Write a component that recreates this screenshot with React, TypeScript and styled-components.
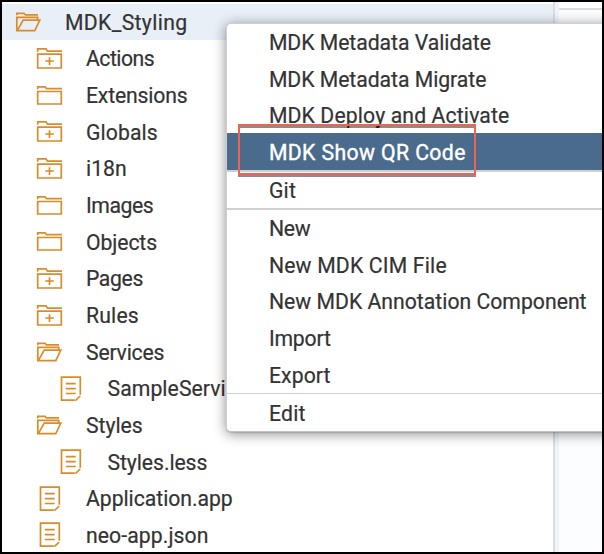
import React from 'react';
import styled, { createGlobalStyle } from 'styled-components';

type IconKind = 'open' | 'closed' | 'plus' | 'file';

const GlobalStyle = createGlobalStyle`
  * { box-sizing: border-box; }
  body { margin: 0; background: #fff; font-family: Roboto, "Liberation Sans", sans-serif; }
`;

const Frame = styled.div`
  position: relative;
  display: flex;
  width: 604px;
  height: 554px;
  overflow: hidden;
  border: 2px solid #000;
  background: #fff;
`;

const Tree = styled.nav`
  width: 551px;
  padding-top: 1.67px;
`;

const TreeRow = styled.div<{ $level: number; $selected?: boolean }>`
  display: flex;
  align-items: center;
  height: 36.67px;
  padding-left: ${p => [13.5, 35, 56][p.$level]}px;
  background: ${p => (p.$selected ? '#e8eff7' : 'transparent')};
`;

const IconSlot = styled.span<{ $level: number }>`
  display: flex;
  flex: none;
  width: ${p => [49.5, 49, 49.5][p.$level]}px;
`;

const Label = styled.span<{ $spacing: number }>`
  display: block;
  font-size: 21.2px;
  line-height: 36.67px;
  padding-top: 1.4px;
  letter-spacing: ${p => p.$spacing}px;
  white-space: nowrap;
  -webkit-text-stroke: 0.2px currentColor;
`;

const TreeLabel = styled(Label)`
  padding-top: 2px;
  color: #333;
`;

const Splitter = styled.div`
  flex: none;
  width: 6px;
  border-left: 2px solid #d9dce3;
  background: #eff4f9;
`;

const Editor = styled.div`
  flex: 1;
  background: #fcfdff;
`;

const EditorTabs = styled.div`
  height: 8px;
  border-bottom: 2px solid #d9dbe2;
  background: #fff;
`;

const Menu = styled.div`
  position: absolute;
  left: 223.5px;
  top: 20.5px;
  width: 390px;
  border: 1px solid #cfcfcf;
  border-bottom-color: #c4c4c4;
  border-radius: 5px;
  background: #fff;
  box-shadow: 0 1px 1px rgba(0, 0, 0, 0.12), 0 2px 13px rgba(0, 0, 0, 0.45);
`;

const MenuItem = styled.div<{ $active?: boolean }>`
  height: 36.67px;
  padding-left: 42.4px;
  background: ${p => (p.$active ? '#4a6b8c' : 'transparent')};
  color: ${p => (p.$active ? '#fff' : '#333')};
`;

const MenuLabel = styled(Label)<{ $active?: boolean }>`
  -webkit-text-stroke-width: ${p => (p.$active ? '0.4px' : '0.2px')};
`;

const Separator = styled.div`
  height: 1.4px;
  background: #d0d0d0;
`;

const Highlight = styled.div`
  position: absolute;
  left: 236px;
  top: 122px;
  width: 238px;
  height: 51px;
  border: 2px solid #ee6352;
  filter: drop-shadow(0 2.5px 0.5px rgba(0, 0, 0, 0.45));
`;

const Svg = styled.svg`
  display: block;
  overflow: visible;
  fill: none;
  stroke: #da8c2b;
  stroke-width: 1.7;
`;

const FileSvg = styled(Svg)`
  margin-left: 0.5px;
`;

function Icon({ kind }: { kind: IconKind }) {
  if (kind === 'file') {
    return (
      <FileSvg width="25" height="26" viewBox="0 0 25 26">
        <path d="M15.8 24.2H2.5V1.2H21.3V18.7M16.4 24.7L21.2 20" />
        <path d="M6.8 7.7H16.7M6.8 12.6H16.7M6.8 17.5H16.7" />
      </FileSvg>
    );
  }
  if (kind === 'open') {
    return (
      <Svg width="25" height="20" viewBox="0 0 25 20">
        <path d="M.8 3.3V1.3H8L9.5 2.8H22M.8 19V5.3H21.7V8" />
        <path d="M1.3 18.7H18.8L23.8 8.2H7.2Z" />
      </Svg>
    );
  }
  if (kind === 'plus') {
    return (
      <Svg width="25" height="21" viewBox="0 0 25 21">
        <path d="M.7 3.7V.8H9L10.5 3.1H25M.7 6.1H24.3V20H.7ZM12.5 9.2V17M8.3 13H16.8" />
      </Svg>
    );
  }
  return (
    <Svg width="25" height="19" viewBox="0 0 25 19">
      <path d="M.7 3.3V.8H8L9.5 2.6H25M.7 5.5H24.3V18H.7Z" />
    </Svg>
  );
}

const tree: { text: string; icon: IconKind; level: number; spacing: number }[] = [
  { text: 'MDK_Styling', icon: 'open', level: 0, spacing: 0.35 },
  { text: 'Actions', icon: 'plus', level: 1, spacing: -0.5 },
  { text: 'Extensions', icon: 'closed', level: 1, spacing: -0.18 },
  { text: 'Globals', icon: 'plus', level: 1, spacing: 0.1 },
  { text: 'i18n', icon: 'plus', level: 1, spacing: 0 },
  { text: 'Images', icon: 'closed', level: 1, spacing: -0.44 },
  { text: 'Objects', icon: 'closed', level: 1, spacing: -0.1 },
  { text: 'Pages', icon: 'plus', level: 1, spacing: -0.38 },
  { text: 'Rules', icon: 'plus', level: 1, spacing: 0.18 },
  { text: 'Services', icon: 'open', level: 1, spacing: -0.2 },
  { text: 'SampleServi', icon: 'file', level: 2, spacing: 0.07 },
  { text: 'Styles', icon: 'open', level: 1, spacing: -0.05 },
  { text: 'Styles.less', icon: 'file', level: 2, spacing: -0.08 },
  { text: 'Application.app', icon: 'file', level: 1, spacing: -0.04 },
  { text: 'neo-app.json', icon: 'file', level: 1, spacing: 0.08 },
];

const menu: { text: string; spacing: number; active?: boolean; divided?: boolean }[] = [
  { text: 'MDK Metadata Validate', spacing: -0.04 },
  { text: 'MDK Metadata Migrate', spacing: -0.04 },
  { text: 'MDK Deploy and Activate', spacing: 0.13 },
  { text: 'MDK Show QR Code', spacing: 0.41, active: true },
  { text: 'Git', spacing: 0.3, divided: true },
  { text: 'New', spacing: -0.2, divided: true },
  { text: 'New MDK CIM File', spacing: 0.18 },
  { text: 'New MDK Annotation Component', spacing: 0.01 },
  { text: 'Import', spacing: -0.2 },
  { text: 'Export', spacing: 0.1 },
  { text: 'Edit', spacing: 0.24, divided: true },
];

export default function App() {
  return (
    <Frame>
      <GlobalStyle />
      <Tree>
        {tree.map((row, i) => (
          <TreeRow key={row.text} $level={row.level} $selected={i === 0}>
            <IconSlot $level={row.level}><Icon kind={row.icon} /></IconSlot>
            <TreeLabel $spacing={row.spacing}>{row.text}</TreeLabel>
          </TreeRow>
        ))}
      </Tree>
      <Splitter />
      <Editor><EditorTabs /></Editor>
      <Menu role="menu">
        {menu.map(item => (
          <React.Fragment key={item.text}>
            {item.divided && <Separator />}
            <MenuItem role="menuitem" $active={item.active}>
              <MenuLabel $spacing={item.spacing} $active={item.active}>{item.text}</MenuLabel>
            </MenuItem>
          </React.Fragment>
        ))}
      </Menu>
      <Highlight />
    </Frame>
  );
}
